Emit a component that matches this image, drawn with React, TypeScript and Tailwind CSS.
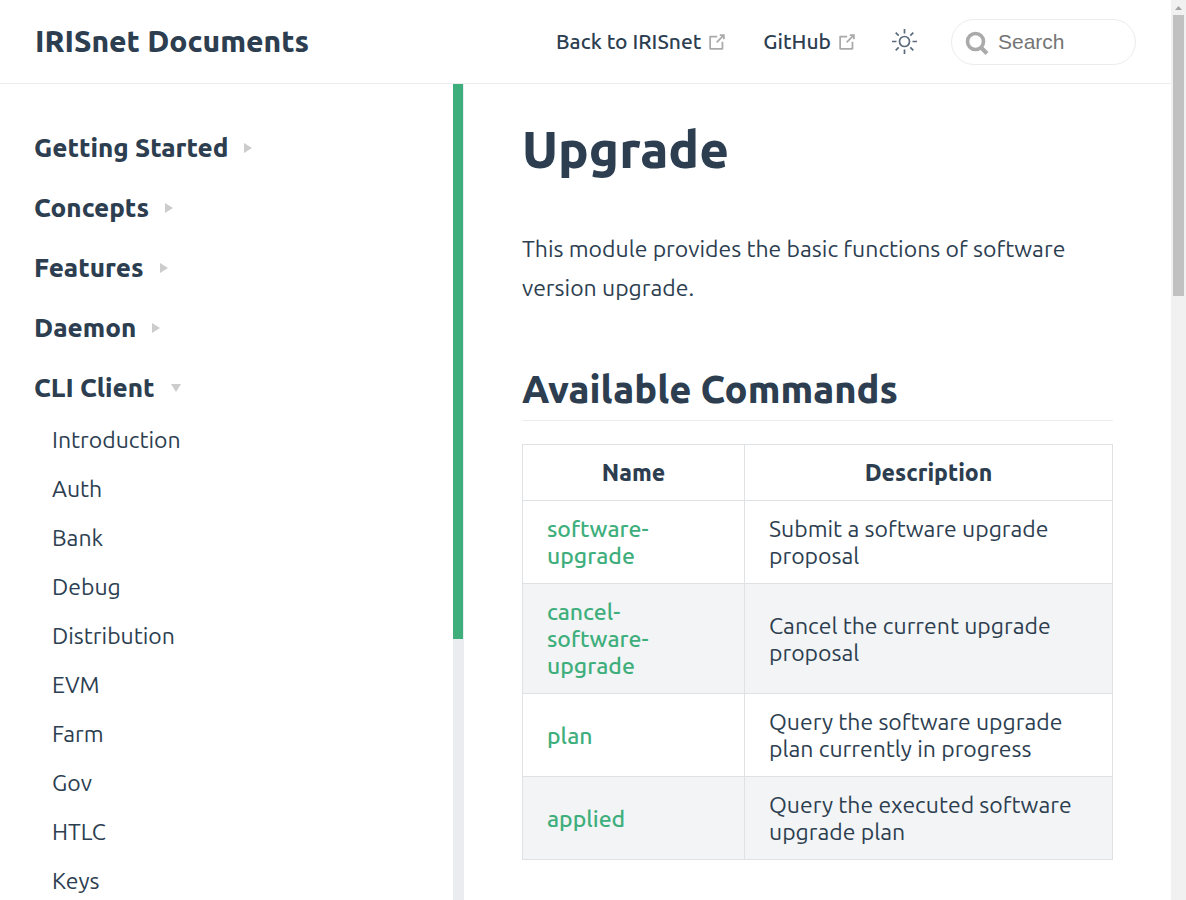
import React from "react";

type Group = { title: string; open?: boolean; items?: string[] };

const groups: Group[] = [
  { title: "Getting Started" },
  { title: "Concepts" },
  { title: "Features" },
  { title: "Daemon" },
  {
    title: "CLI Client",
    open: true,
    items: ["Introduction", "Auth", "Bank", "Debug", "Distribution", "EVM", "Farm", "Gov", "HTLC", "Keys"],
  },
];

const commands = [
  { name: "software-upgrade", description: "Submit a software upgrade proposal" },
  { name: "cancel-software-upgrade", description: "Cancel the current upgrade proposal" },
  { name: "plan", description: "Query the software upgrade plan currently in progress" },
  { name: "applied", description: "Query the executed software upgrade plan" },
];

function OutboundIcon() {
  return (
    <svg aria-hidden="true" viewBox="0 0 100 100" className="h-[22px] w-[22px] shrink-0 fill-[#aaaaaa]">
      <path d="M18.8,85.1h56l0,0c2.2,0,4-1.8,4-4v-32h-8v28h-48v-48h28v-8h-32l0,0c-2.2,0-4,1.8-4,4v56C14.8,83.3,16.6,85.1,18.8,85.1z" />
      <polygon points="45.7,48.7 51.3,54.3 77.2,28.5 77.2,37.2 85.2,37.2 85.2,14.9 62.8,14.9 62.8,22.9 71.5,22.9" />
    </svg>
  );
}

function SunIcon() {
  return (
    <svg aria-hidden="true" viewBox="0 0 26 26" className="h-[26px] w-[26px] fill-none stroke-[#5b6b7b] stroke-[1.7]">
      <circle cx="13.500" cy="12.500" r="5" />
      <path d="M13.500 0v4.500M13.500 20.500v4.500M1 12.500h4.500M21.500 12.500h4.500M4.700 3.700l3 3M19.300 18.300l3 3M4.700 21.300l3-3M19.300 6.700l3-3" />
    </svg>
  );
}

function SearchIcon() {
  return (
    <svg aria-hidden="true" viewBox="0 0 24 24" className="mt-0.5 h-6 w-6 shrink-0 fill-none stroke-[#aaaaaa]">
      <circle cx="10.500" cy="10.500" r="8" strokeWidth="3.600" />
      <path d="M16 16.500l6 6" strokeWidth="4" />
    </svg>
  );
}

function Arrow({ open }: { open?: boolean }) {
  return open ? (
    <svg aria-hidden="true" viewBox="0 0 10 8" className="mt-0.5 h-2 w-2.5 fill-[#cccccc]">
      <path d="M0 0h10L5 8z" />
    </svg>
  ) : (
    <svg aria-hidden="true" viewBox="0 0 8 10" className="mt-0.5 h-2.5 w-2 fill-[#cccccc]">
      <path d="M0 0v10l8-5z" />
    </svg>
  );
}

function Header() {
  return (
    <header className="flex h-[84px] shrink-0 items-center justify-between border-b border-[#eaecef] px-[35px]">
      <a href="#home" className="pb-0.5 text-[30px] font-extrabold leading-9">
        IRISnet Documents
      </a>
      <div className="flex items-center">
        <nav className="flex items-center gap-[35px] text-[21px] font-medium leading-8">
          <a href="#irisnet" className="flex items-center gap-[5px]">
            <span className="pb-0.5">Back to IRISnet</span>
            <OutboundIcon />
          </a>
          <a href="#github" className="flex items-center gap-[5px]">
            <span className="pb-0.5">GitHub</span>
            <OutboundIcon />
          </a>
        </nav>
        <button type="button" aria-label="Theme" className="ml-[33px]">
          <SunIcon />
        </button>
        <label className="ml-[34px] flex h-[46px] w-[185px] items-center gap-[9px] rounded-full border border-[#eaecef] pl-[13px] pr-4">
          <SearchIcon />
          <input
            type="text"
            aria-label="Search"
            placeholder="Search"
            className="w-full min-w-0 bg-transparent font-['Liberation_Sans',sans-serif] text-[21px] leading-8 outline-none placeholder:text-[#757575]"
          />
        </label>
      </div>
    </header>
  );
}

function Sidebar() {
  return (
    <aside className="flex w-[464px] shrink-0 overflow-hidden border-r border-[#eaecef]">
      <nav className="min-w-0 flex-1 pt-[33px]">
        {groups.map((group) => (
          <section key={group.title}>
            <button
              type="button"
              aria-expanded={!!group.open}
              className="flex h-[60px] w-full items-center gap-4 px-[34px] text-left text-[26px] font-extrabold"
            >
              {group.title}
              <Arrow open={group.open} />
            </button>
            {group.items && (
              <ul className="-mt-px">
                {group.items.map((item) => (
                  <li key={item}>
                    <a href={"#" + item.toLowerCase()} className="flex h-[49px] items-center pl-[52px] text-[23px]">
                      {item}
                    </a>
                  </li>
                ))}
              </ul>
            )}
          </section>
        ))}
      </nav>
      <div aria-hidden="true" className="w-2.5 bg-[#eaecef]">
        <div className="h-[68%] bg-[#3eaf7c]" />
      </div>
    </aside>
  );
}

function Content() {
  return (
    <main className="min-w-0 flex-1 overflow-hidden px-[58px] text-[23px]">
      <h1 className="mt-8 text-[51px] font-extrabold leading-[66px]">Upgrade</h1>
      <p className="mt-[47px] leading-[39px]">This module provides the basic functions of software version upgrade.</p>
      <h2 className="mt-14 border-b border-[#eaecef] pb-[5px] text-[38px] font-extrabold leading-[52px]">
        Available Commands
      </h2>
      <table className="mt-[23px] w-full border-collapse leading-[27px]">
        <thead>
          <tr>
            <th className="w-[222px] border border-[#dfe2e5] px-6 py-3.5 font-extrabold">Name</th>
            <th className="border border-[#dfe2e5] px-6 py-3.5 font-extrabold">Description</th>
          </tr>
        </thead>
        <tbody>
          {commands.map((command) => (
            <tr key={command.name} className="even:bg-[#f3f4f5]">
              <td className="border border-[#dfe2e5] px-6 py-3.5">
                <a href={"#" + command.name} className="font-medium text-[#3eaf7c]">
                  {command.name}
                </a>
              </td>
              <td className="border border-[#dfe2e5] px-6 py-3.5">{command.description}</td>
            </tr>
          ))}
        </tbody>
      </table>
    </main>
  );
}

export default function App() {
  return (
    <div className="flex h-screen bg-white font-[Ubuntu,'Noto_Sans',sans-serif] text-[#2c3e50]">
      <div className="flex min-w-0 flex-1 flex-col">
        <Header />
        <div className="flex min-h-0 flex-1">
          <Sidebar />
          <Content />
        </div>
      </div>
      <div aria-hidden="true" className="flex w-[15px] shrink-0 flex-col items-center bg-[#f1f1f1]">
        <svg viewBox="0 0 15 15" className="h-[15px] w-[15px] fill-[#a3a3a3]">
          <path d="M4 10h7L7.500 6z" />
        </svg>
        <div className="h-[281px] w-[11px] bg-[#c1c1c1]" />
      </div>
    </div>
  );
}
